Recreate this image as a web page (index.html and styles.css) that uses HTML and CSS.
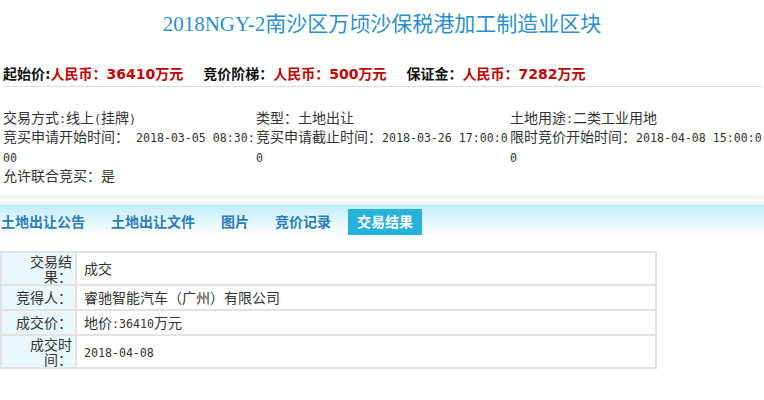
FILE: index.html
```html
<!DOCTYPE html>
<html lang="zh-CN">
<head>
<meta charset="utf-8">
<title>2018NGY-2南沙区万顷沙保税港加工制造业区块</title>
<link rel="stylesheet" href="styles.css">
</head>
<body>
<h1 class="title">2018NGY-2南沙区万顷沙保税港加工制造业区块</h1>

<div class="prices">
  <span class="price"><b class="plabel">起始价:</b><b class="pvalue">人民币：36410万元</b></span>
  <span class="price"><b class="plabel">竞价阶梯：</b><b class="pvalue">人民币：500万元</b></span>
  <span class="price"><b class="plabel">保证金：</b><b class="pvalue">人民币：7282万元</b></span>
</div>

<div class="info">
  <div class="cell">交易方式<span class="num">:</span>线上<span class="num">(</span>挂牌<span class="num">)</span></div>
  <div class="cell">类型：土地出让</div>
  <div class="cell">土地用途<span class="num">:</span>二类工业用地</div>
  <div class="cell">竞买申请开始时间：<span class="num"> 2018-03-05 08:30:</span><span class="num">00</span></div>
  <div class="cell">竞买申请截止时间：<span class="num">2018-03-26 17:00:0</span><span class="num">0</span></div>
  <div class="cell">限时竞价开始时间：<span class="num">2018-04-08 15:00:0</span><span class="num">0</span></div>
  <div class="cell">允许联合竞买：是</div>
</div>

<div class="tabbar">
  <ul class="tabs">
    <li class="tab">土地出让公告</li>
    <li class="tab">土地出让文件</li>
    <li class="tab">图片</li>
    <li class="tab">竞价记录</li>
    <li class="tab active">交易结果</li>
  </ul>
</div>

<table class="result">
  <tr><th>交易结果：</th><td>成交</td></tr>
  <tr><th>竞得人：</th><td>睿驰智能汽车（广州）有限公司</td></tr>
  <tr><th>成交价：</th><td>地价<span class="num">:36410</span>万元</td></tr>
  <tr><th>成交时间：</th><td><span class="num">2018-04-08</span></td></tr>
</table>
</body>
</html>
```
FILE: styles.css
```css
html, body {
  margin: 0;
  padding: 0;
  background: #ffffff;
}

body {
  width: 764px;
  font-family: "Noto Sans CJK SC", sans-serif;
  font-size: 14px;
  color: #333333;
}

.num {
  font-family: "DejaVu Sans Mono", "Noto Sans CJK SC", monospace;
  font-size: 11.6px;
  line-height: 12px;
}

.title {
  margin: 0;
  padding-top: 10px;
  line-height: 28px;
  height: 28px;
  text-align: center;
  font-family: "Liberation Serif", "Noto Sans CJK SC", serif;
  font-size: 21px;
  font-weight: normal;
  color: #2b8fcf;
  white-space: nowrap;
}

.prices {
  display: flex;
  gap: 20px;
  margin: 0 2px 0 3px;
  padding: 26px 0 2px;
  line-height: 20px;
  border-bottom: 1px solid #dddddd;
  font-family: "DejaVu Sans", "Noto Sans CJK SC", sans-serif;
  font-size: 14px;
  white-space: nowrap;
}

.plabel {
  color: #111111;
}

.pvalue {
  color: #c40000;
}

.info {
  display: grid;
  grid-template-columns: 253px 254px 254px;
  margin: 21px 0 0 3px;
  line-height: 19.3px;
  font-size: 14px;
  color: #333333;
}

.cell {
  word-break: break-all;
}

.tabbar {
  margin-top: 10px;
  height: 45px;
  background: linear-gradient(to bottom, #f4f6f6 0, #f4f6f6 9px, #bfecfa 10px, #e6f8fd 28px, #ffffff 42px);
}

.tabs {
  list-style: none;
  display: flex;
  margin: 0 0 0 -8px;
  padding: 14px 0 0;
}

.tab {
  padding: 0 9px;
  margin-right: 8px;
  height: 26px;
  line-height: 24px;
  font-size: 14px;
  font-weight: bold;
  color: #2a7cba;
  white-space: nowrap;
}

.tab.active {
  background: #27b1dd;
  color: #ffffff;
}

.result {
  margin-top: 11px;
  width: 657px;
  border-collapse: collapse;
  font-size: 14px;
  color: #333333;
}

.result th,
.result td {
  border: 2px solid #e2e2e2;
  height: 21px;
  padding: 1px 2px;
  line-height: 14.5px;
  vertical-align: middle;
  word-break: break-all;
}

.result th {
  width: 56px;
  padding: 1px 3px 1px 14px;
  background: #e9f6fb;
  font-weight: normal;
  text-align: right;
}

.result td {
  padding-left: 7px;
  text-align: left;
}
```
